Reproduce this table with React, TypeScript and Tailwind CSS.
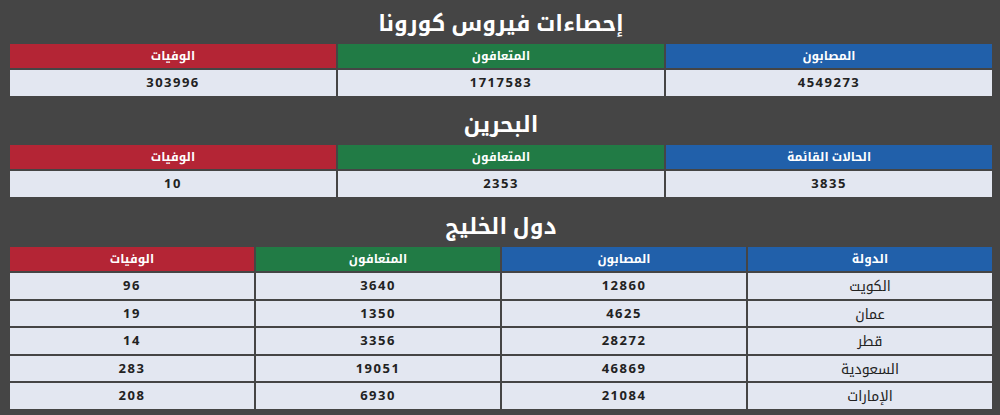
const blue = "bg-[#2160aa]";
const green = "bg-[#217b45]";
const red = "bg-[#b42535]";

type Col = { label: string; color: string };

const world: Col[] = [
  { label: "المصابون", color: blue },
  { label: "المتعافون", color: green },
  { label: "الوفيات", color: red },
];

const bahrain: Col[] = [
  { label: "الحالات القائمة", color: blue },
  { label: "المتعافون", color: green },
  { label: "الوفيات", color: red },
];

const gulfCols: Col[] = [
  { label: "الدولة", color: blue },
  { label: "المصابون", color: blue },
  { label: "المتعافون", color: green },
  { label: "الوفيات", color: red },
];

const gulf = [
  ["الكويت", "12860", "3640", "96"],
  ["عمان", "4625", "1350", "19"],
  ["قطر", "28272", "3356", "14"],
  ["السعودية", "46869", "19051", "283"],
  ["الإمارات", "21084", "6930", "208"],
];

function Title({ text }: { text: string }) {
  return (
    <h2 className="h-[44px] flex items-center justify-center text-white text-[22px] font-bold">
      {text}
    </h2>
  );
}

function Table({ cols, rows, rowH }: { cols: Col[]; rows: string[][]; rowH: string }) {
  const grid = cols.length === 3 ? "grid-cols-3" : "grid-cols-4";
  return (
    <div className={`grid ${grid} gap-[2px]`}>
      {cols.map((c) => (
        <div
          key={c.label}
          className={`${c.color} h-[24px] flex items-center justify-center text-white text-[12px] font-bold`}
        >
          {c.label}
        </div>
      ))}
      {rows.map((r, i) =>
        r.map((v, j) => {
          const isNum = /^\d+$/.test(v);
          return (
            <div
              key={i + "-" + j}
              className={`bg-[#e3e7f1] ${rowH} flex items-center justify-center text-[#222] ${
                isNum ? "font-bold text-[13px] tracking-[1.5px]" : "text-[14px]"
              }`}
            >
              {v}
            </div>
          );
        })
      )}
    </div>
  );
}

export default function App() {
  return (
    <div
      dir="rtl"
      className="w-[1000px] h-[415px] bg-[#454545] pl-[10px] pr-[8px] overflow-hidden"
      style={{ fontFamily: '"Open Sans", "Noto Kufi Arabic", "Noto Sans Arabic", "DejaVu Sans", sans-serif' }}
    >
      <Title text="إحصاءات فيروس كورونا" />
      <Table cols={world} rows={[["4549273", "1717583", "303996"]]} rowH="h-[26px]" />
      <div className="h-[5px]" />
      <Title text="البحرين" />
      <Table cols={bahrain} rows={[["3835", "2353", "10"]]} rowH="h-[26px]" />
      <div className="h-[6px]" />
      <Title text="دول الخليج" />
      <Table cols={gulfCols} rows={gulf} rowH="h-[25.5px]" />
    </div>
  );
}
